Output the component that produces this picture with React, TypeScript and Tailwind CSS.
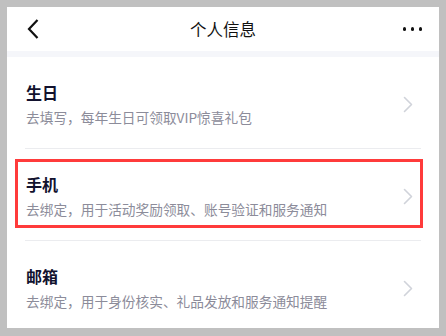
const rows = [
  { title: "生日", desc: "去填写，每年生日可领取VIP惊喜礼包" },
  { title: "手机", desc: "去绑定，用于活动奖励领取、账号验证和服务通知", marked: true },
  { title: "邮箱", desc: "去绑定，用于身份核实、礼品发放和服务通知提醒" },
];

function Chevron() {
  return (
    <svg width="10" height="17" viewBox="0 0 10 17" fill="none" className="shrink-0">
      <path d="M1.5 1.5L8.5 8.5L1.5 15.5" stroke="#d0d3da" strokeWidth="1.6" strokeLinecap="round" strokeLinejoin="round" />
    </svg>
  );
}

export default function App() {
  return (
    <div
      className="h-[336px] w-[446px] bg-[#c0c0c0] pt-[7px] pr-[7px] pb-[8px] pl-[7px]"
      style={{ fontFamily: '"Noto Sans CJK SC", "Noto Sans", sans-serif' }}
    >
      <div className="flex h-full flex-col overflow-hidden bg-white">
        <header className="relative flex h-[44px] shrink-0 items-center justify-between px-[20px]">
          <svg width="12" height="20" viewBox="0 0 12 20" fill="none">
            <path d="M10.5 1L2 10L10.5 19" stroke="#111" strokeWidth="2.2" strokeLinejoin="miter" />
          </svg>
          <h1 className="absolute left-1/2 -translate-x-1/2 text-[16.5px] text-[#111]">个人信息</h1>
          <div className="mr-[-3px] flex items-center gap-[4.5px]">
            <span className="h-[3.5px] w-[3.5px] rounded-full bg-[#111]" />
            <span className="h-[3.5px] w-[3.5px] rounded-full bg-[#111]" />
            <span className="h-[3.5px] w-[3.5px] rounded-full bg-[#111]" />
          </div>
        </header>
        <div className="h-[6px] shrink-0 bg-[#f5f6fa]" />
        <ul className="flex flex-col">
          {rows.map((r, i) => (
            <li key={r.title} className="relative">
              {i > 0 && <div className="mx-[18px] h-px bg-[#ebecef]" />}
              <div className="flex items-center justify-between pt-[24px] pr-[26px] pb-[21px] pl-[19px]">
                <div className="flex flex-col gap-[4px]">
                  <span className="text-[16px] leading-[22px] font-bold text-[#12122e]">{r.title}</span>
                  <span className="text-[13.7px] leading-[20px] text-[#8c8c9a]">{r.desc}</span>
                </div>
                <Chevron />
              </div>
              {r.marked && (
                <div className="absolute top-[11px] left-[8px] h-[69px] w-[408px] border-[3px] border-[#ff3b3b]" />
              )}
            </li>
          ))}
        </ul>
      </div>
    </div>
  );
}
